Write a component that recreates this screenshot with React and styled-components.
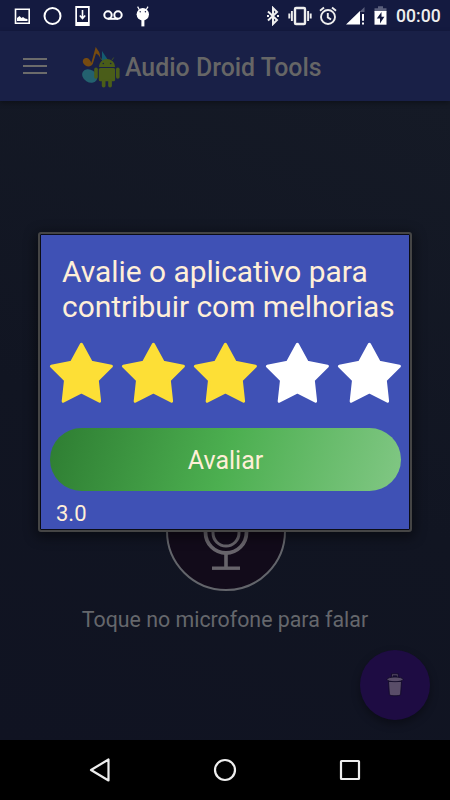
import React from "react";
import styled, { createGlobalStyle } from "styled-components";

const App = () => {
  const rating = 3;
  return (
    <Screen>
      <GlobalStyle />
      <StatusBar>
        <StatusGroup>
          <PictureIcon />
          <RingIcon />
          <DownloadIcon />
          <VoicemailIcon />
          <DroidHeadIcon />
        </StatusGroup>
        <StatusGroup $right>
          <BluetoothIcon />
          <VibrateIcon />
          <AlarmIcon />
          <SignalIcon />
          <BatteryIcon />
          <Clock>00:00</Clock>
        </StatusGroup>
      </StatusBar>
      <Toolbar>
        <Burger aria-label="Menu">
          <span />
          <span />
          <span />
        </Burger>
        <Logo />
        <Title>Audio Droid Tools</Title>
      </Toolbar>
      <Content>
        <MicButton aria-label="Microfone">
          <MicIcon />
        </MicButton>
        <Hint>Toque no microfone para falar</Hint>
        <Fab aria-label="Apagar">
          <TrashIcon />
        </Fab>
      </Content>
      <NavBar>
        <NavButton aria-label="Voltar">
          <svg width="24" height="26" viewBox="0 0 24 26">
            <path d="M20.5 2.5V23.5L3 13Z" />
          </svg>
        </NavButton>
        <NavButton aria-label="Início">
          <svg width="24" height="26" viewBox="0 0 24 26">
            <circle cx="12" cy="13" r="10" />
          </svg>
        </NavButton>
        <NavButton aria-label="Recentes">
          <svg width="24" height="26" viewBox="0 0 24 26">
            <rect x="3" y="4" width="18" height="18" rx="0.5" />
          </svg>
        </NavButton>
      </NavBar>
      <Overlay>
        <Dialog>
          <Question>
            Avalie o aplicativo para
            <br />
            contribuir com melhorias
          </Question>
          <Stars>
            {[1, 2, 3, 4, 5].map((n) => (
              <Star key={n} viewBox="0 0 64 62" $on={n <= rating}>
                <path d="M32.4 3.2L42.2 21.3L62.4 25.3L48.3 39.2L50.6 60.2L32.4 50.8L14.2 60.2L16.5 39.2L2.4 25.3L22.6 21.3Z" />
              </Star>
            ))}
          </Stars>
          <RateButton>Avaliar</RateButton>
          <Score>3.0</Score>
        </Dialog>
      </Overlay>
    </Screen>
  );
};

// Status bar icons
const PictureIcon = () => (
  <svg width="16" height="20" viewBox="0 0 16 20">
    <path d="M1.5 3.2H15.2V17.2H1.5Z" fill="none" stroke="#fff" strokeWidth="1.6" />
    <path d="M3 15V12L5.5 10L7.5 12L9 11L11 12.5L13.5 13V15Z" fill="#fff" />
  </svg>
);
const RingIcon = () => (
  <svg width="19" height="20" viewBox="0 0 19 20">
    <circle cx="9.5" cy="10" r="8" fill="none" stroke="#fff" strokeWidth="2" />
  </svg>
);
const DownloadIcon = () => (
  <svg width="15" height="20" viewBox="0 0 15 20">
    <path d="M0.3 0H14.7V20H0.3ZM2 2V16H13V2Z" fill="#fff" fillRule="evenodd" />
    <path d="M7.5 4V12M4.8 9.5L7.5 12.5L10.2 9.5" fill="none" stroke="#fff" strokeWidth="1.6" />
  </svg>
);
const VoicemailIcon = () => (
  <svg width="20" height="20" viewBox="0 0 20 20">
    <g fill="none" stroke="#fff" strokeWidth="2">
      <circle cx="5" cy="9" r="3.7" />
      <circle cx="15" cy="9" r="3.7" />
      <path d="M5 12.8H15" />
    </g>
  </svg>
);
const DroidHeadIcon = () => (
  <svg width="14" height="21" viewBox="0 0 14 21">
    <path d="M1.6 0.6L3.4 3.8M12 0.6L10.2 3.8" stroke="#fff" strokeWidth="1.2" />
    <ellipse cx="6.8" cy="8.3" rx="6.2" ry="6.2" fill="#fff" />
    <path d="M5.4 13H8.4V20.4H5.4Z" fill="#fff" />
    <circle cx="4.2" cy="5.8" r="0.7" fill="#141a40" />
    <circle cx="9.4" cy="5.8" r="0.7" fill="#141a40" />
  </svg>
);
const BluetoothIcon = () => (
  <svg width="12" height="20" viewBox="0 0 12 20">
    <path d="M1 5.5L10 14L6 18V2L10 6L1 14.5" fill="none" stroke="#eee" strokeWidth="2" />
    <path d="M0 10H2M10 10H12" stroke="#eee" strokeWidth="2" />
  </svg>
);
const VibrateIcon = () => (
  <VibrateSvg width="24" height="20" viewBox="0 0 24 20">
    <rect x="7" y="2" width="10" height="16" rx="1" fill="none" stroke="#eee" strokeWidth="2.4" />
    <path d="M1.3 7.5V12.5M3.9 5V15M20.1 5V15M22.7 7.5V12.5" stroke="#eee" strokeWidth="1.9" />
  </VibrateSvg>
);
const AlarmIcon = () => (
  <svg width="18" height="20" viewBox="0 0 18 20">
    <g fill="none" stroke="#eee" strokeWidth="1.9">
      <circle cx="9" cy="11" r="7" />
      <path d="M1 4.7L5 1.5M17 4.7L13 1.5M8.8 7V11.4L12 13.5" />
    </g>
  </svg>
);
const SignalIcon = () => (
  <svg width="19" height="20" viewBox="0 0 19 20">
    <path d="M18.5 1V6H13.5Z" fill="#5a5f7b" />
    <path d="M0 18.5L14 5V18.5ZM16 8H18V14.8H16ZM16 16.4H18V18.5H16Z" fill="#fff" />
  </svg>
);
const BatteryIcon = () => (
  <svg width="13" height="20" viewBox="0 0 13 20">
    <path d="M0.5 2.2H4V0.3H9V2.2H12.5V6H0.5Z" fill="#5a5f7b" />
    <path d="M0.5 5H12.5V18.7H0.5Z" fill="#fff" />
    <path d="M7.5 6L2.8 12.4H6V17.4L10.4 10.8H7.5Z" fill="#141a40" />
  </svg>
);

const Logo = () => (
  <LogoSvg viewBox="0 0 38 42">
    <path d="M20 5L28 17L20 20Z" fill="#145b70" />
    <ellipse cx="7.7" cy="30" rx="8" ry="6.2" transform="rotate(32 7.7 30)" fill="#23616f" />
    <path
      d="M9.3 17L13.8 0.8C15.3 4.5 18.5 5.5 18 11.5C16.8 8.7 15.2 8.2 14 7.6L10.8 17.7C9 21.5 3.3 21.2 1.3 17.3C-0.2 14.2 1.8 11.5 5 12.1C7 12.5 8.4 14.4 9.3 17Z"
      fill="#764b10"
    />
    <g fill="#4a5d19">
      <path d="M17 21C17.3 10.2 32.7 10.2 33 21Z" />
      <rect x="16.8" y="22" width="16.3" height="13.2" rx="1.5" />
      <rect x="12.2" y="21.5" width="3.6" height="11.3" rx="1.8" />
      <rect x="34" y="21.5" width="3.6" height="11.3" rx="1.8" />
      <rect x="19.8" y="33" width="3.7" height="8.5" rx="1.8" />
      <rect x="26.2" y="33" width="3.7" height="8.5" rx="1.8" />
    </g>
    <path d="M20 14L18.3 11.5M30 14L31.7 11.5" stroke="#4a5d19" strokeWidth="0.8" />
    <circle cx="21.3" cy="17.5" r="0.8" fill="#192047" />
    <circle cx="28.7" cy="17.5" r="0.8" fill="#192047" />
  </LogoSvg>
);

const MicIcon = () => (
  <svg width="60" height="80" viewBox="0 0 60 80">
    <g fill="none" stroke="#67646b">
      <rect x="17" y="10" width="26" height="45" rx="13" strokeWidth="3" />
      <path d="M9.5 32V41.5A20.5 20.5 0 0 0 50.5 41.5V32" strokeWidth="3.8" />
      <path d="M30 62V77" strokeWidth="3.6" />
      <path d="M16 77.2H44" strokeWidth="3.4" />
    </g>
  </svg>
);

const TrashIcon = () => (
  <svg width="18" height="24" viewBox="0 0 18 24">
    <g fill="#594d68" stroke="#0e0825" strokeWidth="0.8">
      <path d="M5.6 5V0.8H12.2V5H10.7V2.8H7.1V5Z" />
      <path d="M2.5 8.5H15.5L14.6 21.5C14.2 23.2 3.8 23.2 3.4 21.5Z" />
      <path d="M1 6.5C1 3.2 17 3.2 17 6.5C17 9.4 1 9.4 1 6.5Z" />
    </g>
  </svg>
);

const GlobalStyle = createGlobalStyle`
  * {
    box-sizing: border-box;
  }
  body {
    margin: 0;
    font-family: Roboto, "Liberation Sans", sans-serif;
  }
  button {
    border: none;
    padding: 0;
    background: none;
    font-family: inherit;
  }
  svg {
    display: block;
    flex-shrink: 0;
  }
`;
const Screen = styled.div`
  position: relative;
  display: flex;
  flex-direction: column;
  width: 450px;
  height: 800px;
  overflow: hidden;
  background: #000;
`;
const StatusBar = styled.header`
  display: flex;
  justify-content: space-between;
  height: 31px;
  padding: 0 10px 0 14px;
  background: #141a40;
`;
const StatusGroup = styled.div`
  display: flex;
  align-items: center;
  height: 32px;
  gap: ${(props) => (props.$right ? "9px" : "13px")};
`;
const VibrateSvg = styled.svg`
  margin-right: -2px;
`;
const Clock = styled.span`
  width: 44px;
  font-size: 17.6px;
  font-weight: 500;
  color: #eee;
  white-space: nowrap;
`;
const Toolbar = styled.div`
  display: flex;
  align-items: center;
  height: 70px;
  padding-left: 23px;
  background: #192047;
  box-shadow: 0 2px 5px rgba(0, 0, 0, 0.35);
  z-index: 1;
`;
const Burger = styled.button`
  display: flex;
  flex-direction: column;
  gap: 5px;
  width: 24px;
  span {
    height: 2px;
    background: #6b6b6b;
  }
`;
const LogoSvg = styled.svg`
  width: 38px;
  height: 42px;
  margin: 1px 0 0 35px;
`;
const Title = styled.h1`
  margin: 3px 0 0 5px;
  font-size: 24.9px;
  font-weight: 500;
  line-height: 30px;
  color: #666;
  white-space: nowrap;
`;
const Content = styled.main`
  display: flex;
  flex-direction: column;
  align-items: center;
  flex: 1;
  padding-top: 370px;
  background: linear-gradient(200deg, #151a26 0%, #111522 55%, #101322 100%);
`;
const MicButton = styled.button`
  display: flex;
  align-items: center;
  justify-content: center;
  width: 120px;
  height: 120px;
  margin-left: 2px;
  border: 2px solid #63656b;
  border-radius: 50%;
  background: #120b1a;
`;
const Hint = styled.p`
  margin: 16px 0 0;
  font-size: 21.35px;
  line-height: 26px;
  color: #65676c;
  white-space: nowrap;
`;
const Fab = styled.button`
  display: flex;
  align-items: center;
  justify-content: center;
  align-self: flex-end;
  width: 70px;
  height: 70px;
  margin: 17px 20px 0 0;
  border-radius: 50%;
  background: #1e0c43;
  box-shadow: 0 4px 8px rgba(0, 0, 0, 0.35);
`;
const NavBar = styled.nav`
  display: flex;
  justify-content: center;
  gap: 101px;
  height: 60px;
`;
const NavButton = styled.button`
  display: flex;
  align-items: center;
  width: 24px;
  svg {
    fill: none;
    stroke: #eee;
    stroke-width: 2.2;
    stroke-linejoin: round;
  }
`;
// The dialog floats above the dimmed page
const Overlay = styled.div`
  position: absolute;
  inset: 0;
  z-index: 2;
  display: flex;
  align-items: flex-start;
  padding: 232px 0 0 38px;
`;
const Dialog = styled.section`
  display: flex;
  flex-direction: column;
  width: 374px;
  height: 300px;
  padding: 20px 9px 0;
  border: 2px solid #454545;
  border-radius: 3px;
  background: #3f51b5;
  box-shadow: inset 0 0 0 1px #0b0c16, 0 3px 12px 3px rgba(0, 0, 0, 0.4);
`;
const Question = styled.h2`
  margin: 0 0 0 13px;
  font-size: 29.9px;
  font-weight: 400;
  line-height: 35px;
  color: #ffefd8;
  white-space: nowrap;
`;
const Stars = styled.div`
  display: flex;
  gap: 8px;
  margin-top: 17px;
`;
const Star = styled.svg`
  width: 64px;
  height: 62px;
  overflow: visible;
  path {
    fill: ${(props) => (props.$on ? "#fddf36" : "#fff")};
    stroke: ${(props) => (props.$on ? "#fddf36" : "#fff")};
    stroke-width: 3;
    stroke-linejoin: round;
  }
`;
const RateButton = styled.button`
  width: 351px;
  height: 63px;
  margin: 25px 0 0 1px;
  padding-top: 2px;
  border-radius: 32px;
  background: linear-gradient(107deg, #2e7d32, #4caf50, #81c784);
  font-size: 25px;
  color: #ffefd8;
`;
const Score = styled.span`
  margin: 10px 0 0 7px;
  font-size: 22px;
  line-height: 26px;
  color: #ffefd8;
`;
export default App;
